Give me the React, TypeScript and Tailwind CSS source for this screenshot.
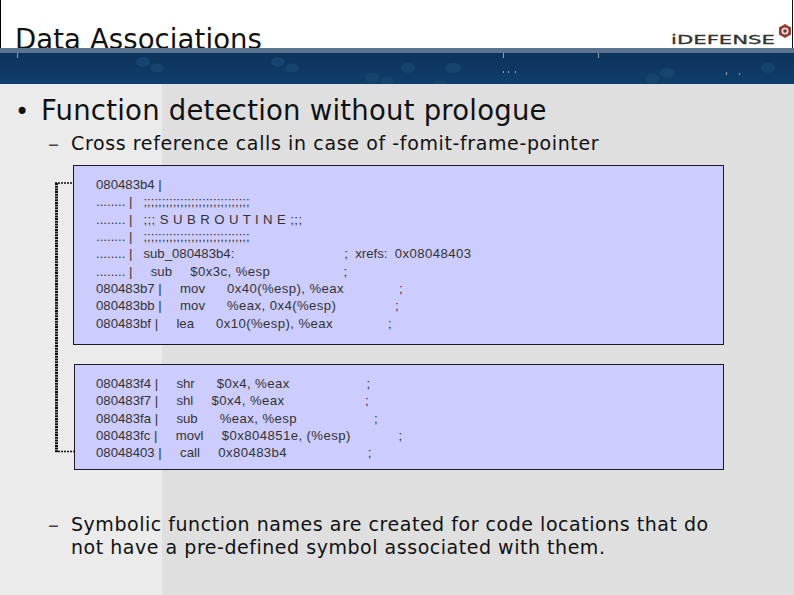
const sp = (n: number) => " ".repeat(n);

type Row = [string, string?, string?];

const box1: Row[] = [
  ["080483b4 |"],
  [`........ |${sp(3)};;;;;;;;;;;;;;;;;;;;;;;;;;;;;`],
  [`........ |${sp(3)}`, ";;; S U B R O U T I N E ;;;"],
  [`........ |${sp(3)};;;;;;;;;;;;;;;;;;;;;;;;;;;;;`],
  [`........ |${sp(3)}sub_080483b4:${sp(30)};${sp(2)}xrefs:${sp(2)}`, "0x08048403"],
  [`........ |${sp(5)}sub${sp(5)}`, "$0x3c, %esp", `${sp(20)};`],
  [`080483b7 |${sp(5)}mov${sp(6)}`, "0x40(%esp), %eax", `${sp(15)};`],
  [`080483bb |${sp(5)}mov${sp(6)}`, "%eax, 0x4(%esp)", `${sp(16)};`],
  [`080483bf |${sp(5)}lea${sp(6)}`, "0x10(%esp), %eax", `${sp(15)};`],
];
const box2: Row[] = [
  [`080483f4 |${sp(5)}shr${sp(6)}`, "$0x4, %eax", `${sp(21)};`],
  [`080483f7 |${sp(5)}shl${sp(5)}`, "$0x4, %eax", `${sp(22)};`],
  [`080483fa |${sp(5)}sub${sp(6)}`, "%eax, %esp", `${sp(21)};`],
  [`080483fc |${sp(5)}movl${sp(5)}`, "$0x804851e, (%esp)", `${sp(13)};`],
  [`08048403 |${sp(5)}call${sp(5)}`, "0x80483b4", `${sp(22)};`],
];

function CodeBox({ rows, className }: { rows: Row[]; className: string }) {
  return (
    <div className={`mr-[70px] border border-[#1a1a2a] bg-[#ccccff] font-['Liberation_Sans',sans-serif] text-[13.2px] leading-[17.35px] text-[#333333] whitespace-pre ${className}`}>
      {rows.map((r, i) => (
        <div key={i}>
          {r[0]}
          {r[1] && <span className="tracking-[0.4px]">{r[1]}</span>}
          {r[2]}
        </div>
      ))}
    </div>
  );
}

export default function App() {
  return (
    <div className="w-[794px] h-[595px] overflow-hidden flex flex-col bg-[linear-gradient(90deg,#ebebeb_162px,#dfdfdf_162px)] font-['DejaVu_Sans',sans-serif] text-[#111111]">
      <header className="relative h-[48px] shrink-0 bg-white border-l border-black overflow-hidden flex items-end pl-[14px] pr-[2px]">
        <h1 className="text-[27.5px] leading-[30px] -mb-[6px] tracking-[0.1px] font-normal text-[#111111]">Data Associations</h1>
        <div className="ml-auto mb-[1px] flex items-end">
          <svg width="124" height="26" viewBox="0 0 124 26">
            <text x="3" y="23" textLength="104" lengthAdjust="spacingAndGlyphs" fontFamily="DejaVu Sans" fontWeight="400" fontSize="13" fill="#333333" stroke="#333333" strokeWidth="0.3">iDEFENSE</text>
            <polygon points="117,3 123,6.5 123,13.5 117,17 111,13.5 111,6.5" fill="#8f3a30" />
            <circle cx="117" cy="10" r="3.6" fill="#e4dcda" />
            <circle cx="117" cy="10" r="1.7" fill="#7c2c24" />
          </svg>
        </div>
        <div className="absolute right-0 top-0 bottom-0 w-[2px] bg-[linear-gradient(90deg,#111111_1px,#ffffff_1px)]" />
      </header>

      <div className="h-[5px] shrink-0 bg-[#5a7491]" />
      <div className="h-[31px] shrink-0 bg-[linear-gradient(180deg,#0d335a,#0f3e6d)]">
        <svg width="794" height="31" viewBox="0 53 794 31">
          <g fill="#17446f">
            <ellipse cx="143" cy="62" rx="7" ry="5" />
            <ellipse cx="157" cy="68" rx="7" ry="4.5" />
            <ellipse cx="278" cy="62" rx="7" ry="5" />
            <ellipse cx="292" cy="68" rx="7" ry="4.5" />
            <ellipse cx="372" cy="78" rx="7" ry="5" />
            <ellipse cx="387" cy="81" rx="7" ry="4" />
            <ellipse cx="408" cy="68" rx="7" ry="5" />
            <ellipse cx="453" cy="68" rx="8" ry="5" />
            <ellipse cx="440" cy="83" rx="7" ry="3" />
            <ellipse cx="652" cy="79" rx="7" ry="5" />
            <ellipse cx="667" cy="73" rx="7" ry="5" />
            <ellipse cx="768" cy="68" rx="7" ry="5" />
          </g>
          <g fill="#8fa5bb">
            <rect x="17" y="53" width="1" height="5" />
            <rect x="503" y="53" width="1" height="5" />
            <rect x="598" y="53" width="1" height="5" />
            <rect x="503" y="71" width="1" height="2" />
            <rect x="508" y="71" width="1" height="2" />
            <rect x="515" y="71" width="1" height="2" />
            <rect x="726" y="72" width="1" height="3" />
            <rect x="739" y="73" width="1" height="2" />
          </g>
        </svg>
      </div>

      <main className="relative flex-1 flex flex-col">
        <div className="mt-[10px] flex h-[32px] items-center pl-[15px] text-[27.5px] leading-[32px] tracking-[0.23px]">
          <span className="w-[26px] pt-[4px] text-[24px] leading-[28px]">•</span>
          <span>Function detection without prologue</span>
        </div>
        <div className="mt-[6px] flex pl-[48px] text-[19px] leading-[23px] tracking-[0.62px]">
          <span className="w-[23px] text-[22px] text-[#444444]">–</span>
          <span>Cross reference calls in case of -fomit-frame-pointer</span>
        </div>

        <CodeBox rows={box1} className="ml-[73px] mt-[10px] h-[180px] pl-[22px] pt-[10px]" />
        <CodeBox rows={box2} className="ml-[74px] mt-[19px] h-[106px] pl-[21px] pt-[10px]" />

        <div className="ml-[48px] mt-[43px] flex text-[19px] leading-[23px] tracking-[0.53px]">
          <span className="w-[23px] shrink-0 text-[22px] text-[#444444]">–</span>
          <span className="w-[660px]">Symbolic function names are created for code locations that do not have a pre-defined symbol associated with them.</span>
        </div>

        <svg className="absolute left-[54px] top-[97px]" width="20" height="274" viewBox="54 181 20 274">
          <path d="M56.5 183 V452" fill="none" stroke="#111111" strokeWidth="3" strokeDasharray="2 0.7" />
          <path d="M55 183 H73 M55 451.5 H74" fill="none" stroke="#111111" strokeWidth="1.4" strokeDasharray="2 1" />
        </svg>
      </main>
    </div>
  );
}
